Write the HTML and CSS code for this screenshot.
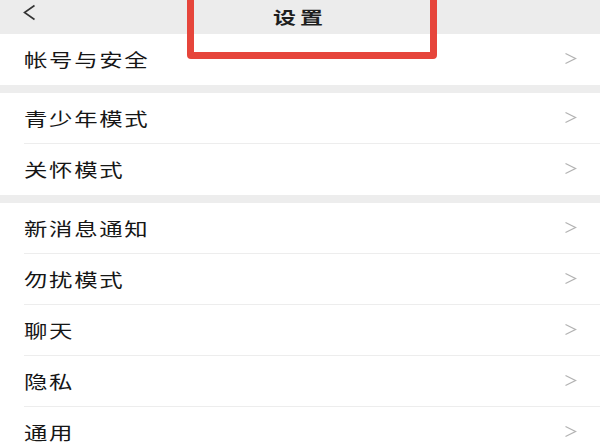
FILE: index.html
```html
<!DOCTYPE html>
<html lang="zh">
<head>
<meta charset="utf-8">
<link rel="stylesheet" href="styles.css">
</head>
<body>
<div class="screen">
  <header class="topbar">
    <span class="back">
      <svg width="14" height="17" viewBox="0 0 14 17"><polyline points="12.5,1.5 2.5,8.5 12.5,15.5" fill="none" stroke="#333" stroke-width="1.6" stroke-linejoin="miter"/></svg>
    </span>
    <h1 class="title"><span class="wide">设置</span></h1>
  </header>
  <div class="highlight"></div>

  <section class="group">
    <div class="row"><span class="label"><span class="wide">帐号与安全</span></span><span class="chev"><svg width="13" height="13" viewBox="0 0 13 13"><polyline points="1.5,1.5 11.5,6.5 1.5,11.5" fill="none" stroke="#b3b3b3" stroke-width="1.3"/></svg></span></div>
  </section>

  <section class="group">
    <div class="row"><span class="label"><span class="wide">青少年模式</span></span><span class="chev"><svg width="13" height="13" viewBox="0 0 13 13"><polyline points="1.5,1.5 11.5,6.5 1.5,11.5" fill="none" stroke="#b3b3b3" stroke-width="1.3"/></svg></span></div>
    <div class="row"><span class="label"><span class="wide">关怀模式</span></span><span class="chev"><svg width="13" height="13" viewBox="0 0 13 13"><polyline points="1.5,1.5 11.5,6.5 1.5,11.5" fill="none" stroke="#b3b3b3" stroke-width="1.3"/></svg></span></div>
  </section>

  <section class="group">
    <div class="row"><span class="label"><span class="wide">新消息通知</span></span><span class="chev"><svg width="13" height="13" viewBox="0 0 13 13"><polyline points="1.5,1.5 11.5,6.5 1.5,11.5" fill="none" stroke="#b3b3b3" stroke-width="1.3"/></svg></span></div>
    <div class="row"><span class="label"><span class="wide">勿扰模式</span></span><span class="chev"><svg width="13" height="13" viewBox="0 0 13 13"><polyline points="1.5,1.5 11.5,6.5 1.5,11.5" fill="none" stroke="#b3b3b3" stroke-width="1.3"/></svg></span></div>
    <div class="row"><span class="label"><span class="wide">聊天</span></span><span class="chev"><svg width="13" height="13" viewBox="0 0 13 13"><polyline points="1.5,1.5 11.5,6.5 1.5,11.5" fill="none" stroke="#b3b3b3" stroke-width="1.3"/></svg></span></div>
    <div class="row"><span class="label"><span class="wide">隐私</span></span><span class="chev"><svg width="13" height="13" viewBox="0 0 13 13"><polyline points="1.5,1.5 11.5,6.5 1.5,11.5" fill="none" stroke="#b3b3b3" stroke-width="1.3"/></svg></span></div>
    <div class="row"><span class="label"><span class="wide">通用</span></span><span class="chev"><svg width="13" height="13" viewBox="0 0 13 13"><polyline points="1.5,1.5 11.5,6.5 1.5,11.5" fill="none" stroke="#b3b3b3" stroke-width="1.3"/></svg></span></div>
  </section>
</div>
</body>
</html>
```

FILE: styles.css
```css
* { box-sizing: border-box; }
html, body {
  margin: 0;
  padding: 0;
  width: 600px;
  height: 444px;
  overflow: hidden;
  background: #ededed;
  font-family: "Noto Sans CJK SC", "Noto Sans", sans-serif;
  color: #1c1c1c;
}
.screen {
  position: relative;
  display: flex;
  flex-direction: column;
  gap: 8px;
  width: 600px;
}
.topbar {
  position: relative;
  height: 34px;
  display: flex;
  align-items: center;
  justify-content: center;
  background: #ececec;
  margin-bottom: -8px;
}
.back {
  position: absolute;
  left: 22px;
  top: 4px;
  display: flex;
}
.title {
  margin: 0;
  font-size: 17px;
  font-weight: 700;
  line-height: 34px;
  color: #1e1e1e;
}
.wide {
  display: inline-block;
  transform: scaleX(1.3);
  transform-origin: left center;
  letter-spacing: 1.3px;
  white-space: nowrap;
}
.title .wide {
  letter-spacing: 3px;
  transform-origin: center;
  transform: scaleX(1.35);
}
.highlight {
  position: absolute;
  left: 187px;
  top: -12px;
  width: 250px;
  height: 71px;
  border: 7px solid #e6453b;
  border-radius: 4px;
  pointer-events: none;
  z-index: 5;
}
.group {
  background: #fff;
  padding-left: 24px;
}
.row {
  height: 51px;
  display: flex;
  align-items: center;
  justify-content: space-between;
  border-bottom: 1px solid #ededed;
  padding-right: 23px;
}
.row:last-child { border-bottom: none; }
.label {
  font-size: 18px;
  line-height: 20px;
  padding-bottom: 1px;
  color: #161616;
}
.chev {
  display: flex;
  margin-top: -2px;
}
```
